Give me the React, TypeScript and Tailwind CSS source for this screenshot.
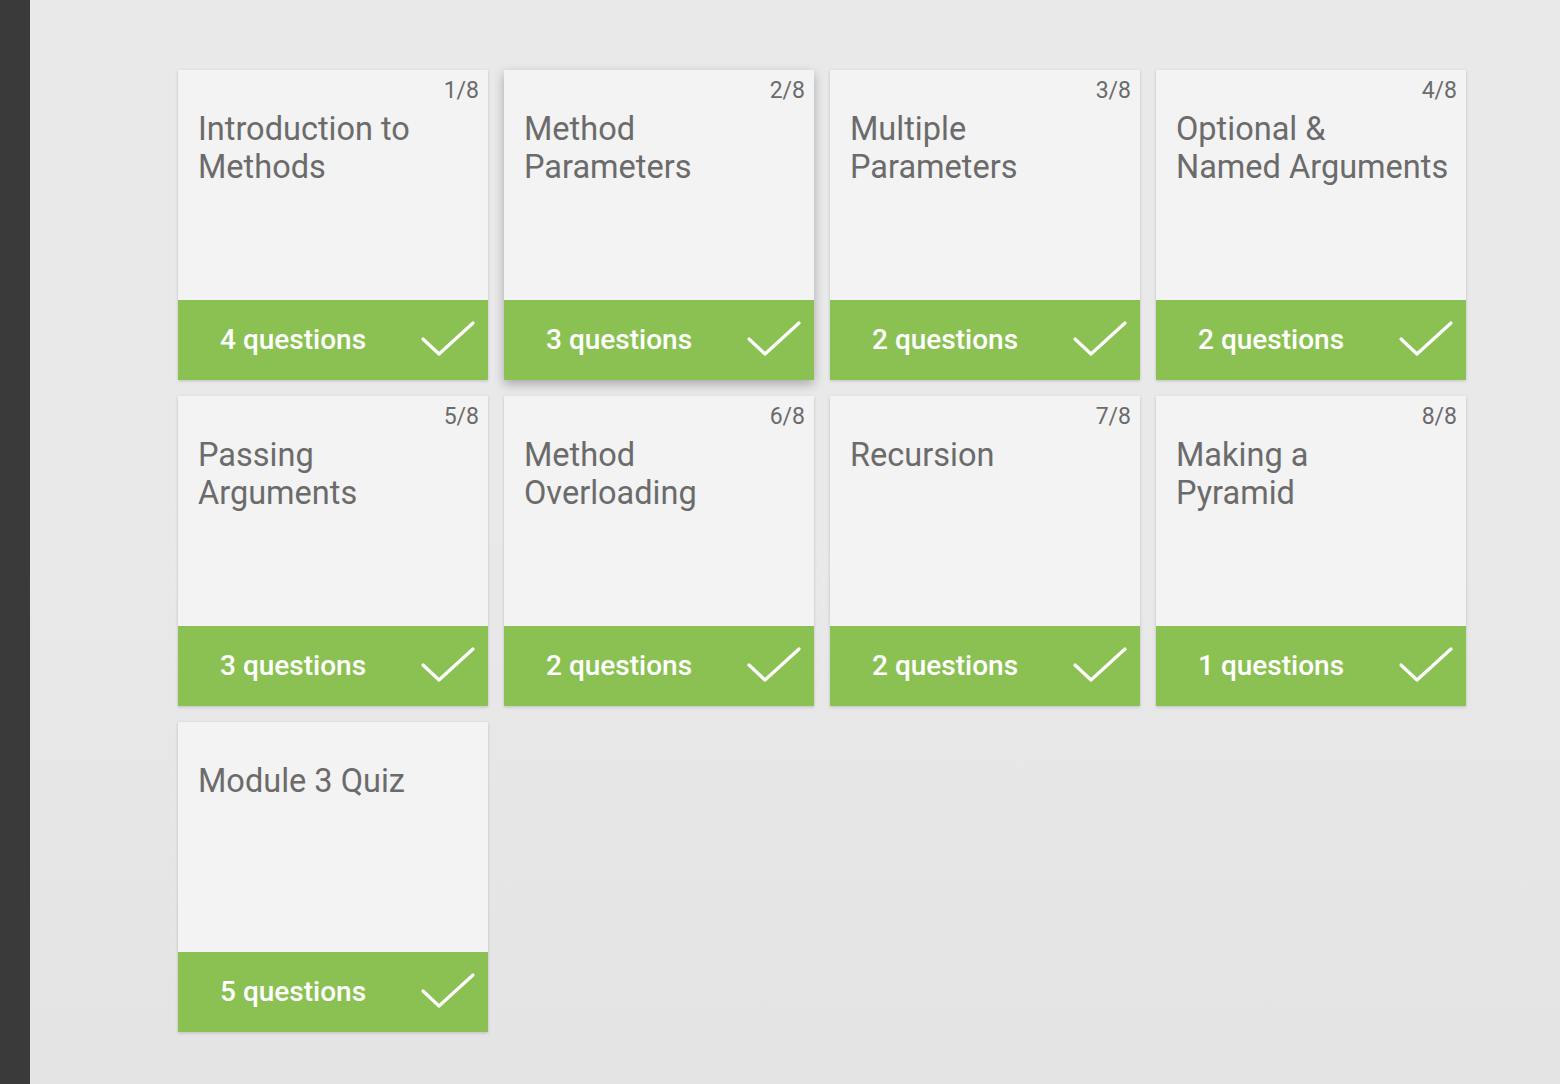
import React from "react";

const lessons = [
  { n: 1, lines: ["Introduction to", "Methods"], q: 4 },
  { n: 2, lines: ["Method", "Parameters"], q: 3, raised: true },
  { n: 3, lines: ["Multiple", "Parameters"], q: 2 },
  { n: 4, lines: ["Optional &", "Named Arguments"], q: 2 },
  { n: 5, lines: ["Passing", "Arguments"], q: 3 },
  { n: 6, lines: ["Method", "Overloading"], q: 2 },
  { n: 7, lines: ["Recursion"], q: 2 },
  { n: 8, lines: ["Making a", "Pyramid"], q: 1 },
  { n: 0, lines: ["Module 3 Quiz"], q: 5 },
];

function Check() {
  return (
    <svg width="56" height="40" viewBox="0 0 56 40" fill="none">
      <polyline points="3,19 19,34 53,3" stroke="white" strokeWidth="3.2" strokeLinecap="round" strokeLinejoin="round" />
    </svg>
  );
}

export default function App() {
  return (
    <div className="flex min-h-screen w-full" style={{ fontFamily: "Roboto, 'Noto Sans', sans-serif" }}>
      <aside className="w-[30px] shrink-0 bg-[#3a3a3a]" />
      <main className="flex-1 bg-gradient-to-b from-[#e9e9e9] via-[#e9e9e9] to-[#e4e4e4] pl-[148px] pt-[70px]">
        <div className="grid grid-cols-[repeat(4,310px)] gap-4">
          {lessons.map((l) => (
            <div
              key={l.lines.join(" ")}
              className={`flex h-[310px] flex-col bg-[#f3f3f3] ${
                l.raised
                  ? "shadow-[0_4px_10px_rgba(0,0,0,0.28)]"
                  : "shadow-[0_1px_3px_rgba(0,0,0,0.18)]"
              }`}
            >
              <div className="flex h-[230px] flex-col pl-[20px] pr-[9px]">
                <div className="mt-[8px] h-[26px] text-right text-[23px] leading-[26px] text-[#6b6b6b]">
                  {l.n > 0 ? `${l.n}/8` : ""}
                </div>
                <h3 className="mt-[6px] text-[32.5px] leading-[38px] text-[#6b6b6b]">
                  {l.lines.map((line) => (
                    <span key={line} className="block whitespace-nowrap">
                      {line}
                    </span>
                  ))}
                </h3>
              </div>
              <div className="flex h-[80px] items-center justify-between bg-[#8bc152] pl-[42px] pr-[12px]">
                <span className="text-[28px] font-medium text-white">{l.q} questions</span>
                <Check />
              </div>
            </div>
          ))}
        </div>
      </main>
    </div>
  );
}
